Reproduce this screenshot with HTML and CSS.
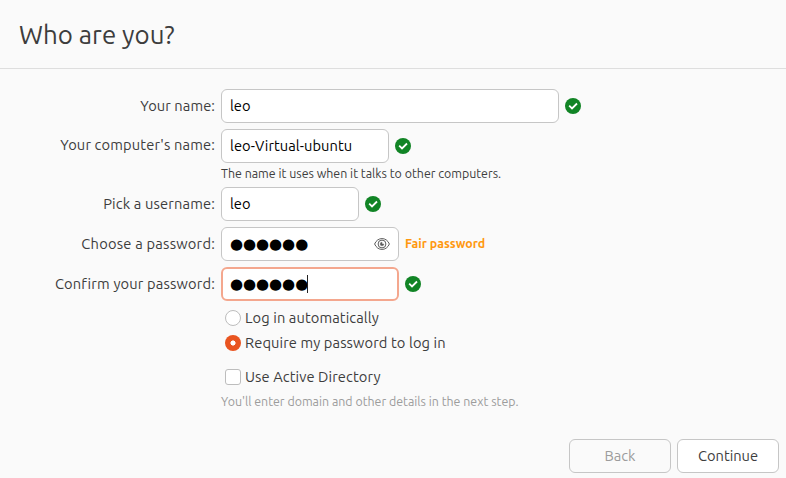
FILE: index.html
```html
<!DOCTYPE html>
<html lang="en">
<head>
<meta charset="utf-8">
<title>Who are you?</title>
<link rel="stylesheet" href="styles.css">
</head>
<body>
<svg class="defs" width="0" height="0">
  <symbol id="check" viewBox="0 0 16 16"><circle cx="8" cy="8" r="8" fill="#118425"/><path d="M4.2 7.7 7 10.4l5-4.9" fill="none" stroke="#fff" stroke-width="1.8"/></symbol>
</svg>
<header class="header"><h1 class="title">Who are you?</h1></header>
<main class="form">
  <div class="row">
    <div class="label"><span class="l-name">Your name:</span></div>
    <div class="entry w-full"><span>leo</span></div>
    <svg class="ok"><use href="#check"/></svg>
  </div>
  <div class="row host">
    <div class="label up"><span class="l-host">Your computer's name:</span></div>
    <div class="entry w-host"><span class="v-host">leo-Virtual-ubuntu</span></div>
    <svg class="ok"><use href="#check"/></svg>
  </div>
  <p class="help">The name it uses when it talks to other computers.</p>
  <div class="row">
    <div class="label"><span class="l-user">Pick a username:</span></div>
    <div class="entry w-user"><span>leo</span></div>
    <svg class="ok"><use href="#check"/></svg>
  </div>
  <div class="row">
    <div class="label"><span class="l-pass">Choose a password:</span></div>
    <div class="entry w-pass"><span class="dots">●●●●●●</span>
      <svg class="eye" viewBox="0 0 16 12" fill="none" stroke="#5c5c5c"><path d="M.6 6C2.200 2.400 4.800.6 8 .6S13.800 2.400 15.400 6C13.800 9.600 11.200 11.400 8 11.400S2.200 9.600.6 6Z"/><circle cx="8" cy="6" r="3.900"/><path d="M8 4.200A1.800 1.800 0 1 0 9.800 6H8Z" fill="#5c5c5c" stroke-width=".5"/></svg>
    </div>
    <strong class="strength">Fair password</strong>
  </div>
  <div class="row">
    <div class="label"><span class="l-confirm">Confirm your password:</span></div>
    <div class="entry w-pass focused"><span class="dots">●●●●●●</span><i class="caret"></i></div>
    <svg class="ok"><use href="#check"/></svg>
  </div>
  <div class="options">
    <div class="option"><i class="radio"></i><span>Log in automatically</span></div>
    <div class="option"><i class="radio on"></i><span>Require my password to log in</span></div>
    <div class="option directory"><i class="box"></i><span>Use Active Directory</span></div>
  </div>
  <p class="hint">You'll enter domain and other details in the next step.</p>
</main>
<footer class="actions">
  <button class="button" disabled>Back</button>
  <button class="button">Continue</button>
</footer>
</body>
</html>
```
FILE: styles.css
```css
* { box-sizing: border-box; }
body {
  margin: 0;
  width: 786px;
  height: 478px;
  overflow: hidden;
  display: flex;
  flex-direction: column;
  background: #fafafa;
  color: #3d3d3d;
  font: 14.667px/20px Ubuntu, "Noto Sans", sans-serif;
  white-space: nowrap;
}
.defs { position: absolute; }
p, h1 { margin: 0; }
.header { height: 69px; padding: 19px 19px 0; border-bottom: 1px solid #dedede; }
.title { font-size: 25.9px; line-height: 32px; font-weight: 400; }
.form { flex: 1; padding-top: 20px; }
.row { display: flex; align-items: center; height: 34px; margin-bottom: 6px; }
.host { margin-bottom: 0; }
.label { width: 215px; margin-right: 6px; text-align: right; }
.l-name { letter-spacing: .08px; }
.l-host { letter-spacing: .16px; }
.l-user { letter-spacing: .15px; }
.l-pass { letter-spacing: .22px; }
.l-confirm { letter-spacing: .16px; }
.v-host { letter-spacing: .06px; }
.up { padding-bottom: 2px; }
.entry {
  display: flex;
  align-items: center;
  height: 34px;
  padding: 0 8px;
  border: 1px solid #c6c6c6;
  border-radius: 6px;
  background: #fff;
  color: #000;
}
.w-full { width: 338px; }
.w-host { width: 168px; }
.w-user { width: 138px; }
.w-pass { width: 178px; }
.focused { border: 2px solid #f4a78e; padding: 0 7px; }
.ok { width: 16px; height: 16px; margin-left: 6px; }
.dots { font: 15px/20px "DejaVu Sans", sans-serif; letter-spacing: -.06px; }
.eye { width: 16px; height: 12px; margin-left: auto; }
.caret { width: 1px; height: 18px; margin-left: -1px; background: #222; }
.strength { margin: -2px 0 0 6px; color: #ff9810; font-size: 12.4px; }
.help { height: 24px; padding-left: 221px; font-size: 12.4px; }
.options { padding: 1px 0 0 225px; margin-top: -1px; letter-spacing: .1px; }
.option { display: flex; align-items: center; gap: 4px; height: 22px; margin-bottom: 3px; }
.directory { margin-top: 12px; }
.radio, .box { width: 16px; height: 16px; border: 1px solid #bdbdbd; background: #fff; }
.radio { border-radius: 50%; }
.on {
  border: 0;
  background: radial-gradient(circle, #fff 2.2px, #e95420 2.9px);
}
.box { border-radius: 3px; }
.hint { padding-left: 221px; font-size: 12.4px; color: #9c9c9c; }
.actions { display: flex; justify-content: flex-end; gap: 6px; padding: 0 7px 5px; }
.button {
  width: 102px;
  height: 34px;
  padding: 0;
  border: 1px solid #c6c6c6;
  border-radius: 6px;
  background: #fff;
  color: #3d3d3d;
  font: inherit;
}
.button:disabled { background: #fafafa; color: #9c9c9c; }
```
